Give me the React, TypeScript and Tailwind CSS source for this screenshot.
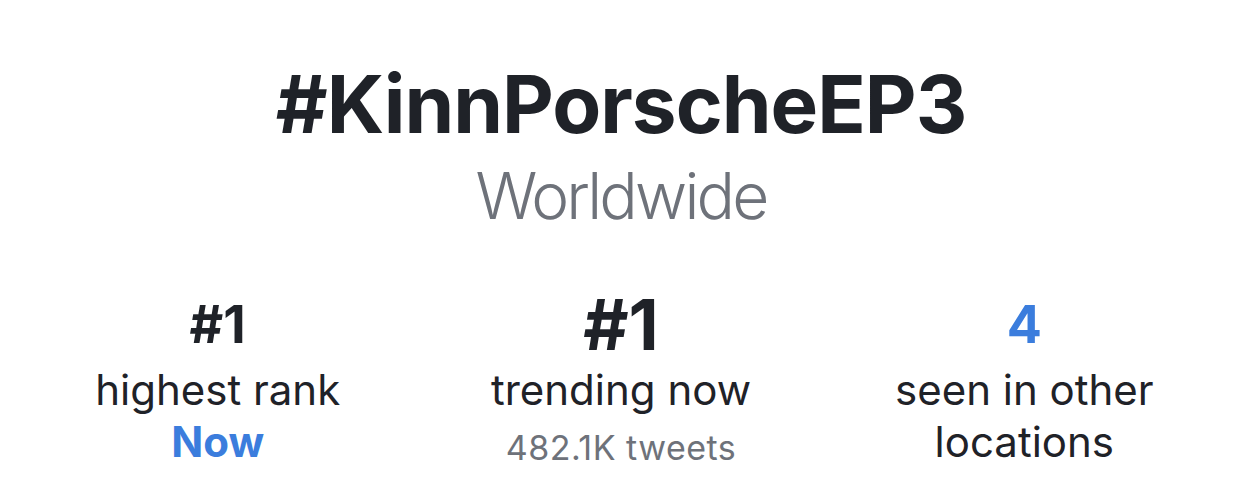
const font = { fontFamily: "Inter, 'Noto Sans', sans-serif" };

function Stat({
  value,
  big,
  blue,
  children,
}: {
  value: string;
  big?: boolean;
  blue?: boolean;
  children: React.ReactNode;
}) {
  return (
    <div className="flex flex-col items-center text-center">
      <div
        className={
          "h-[60px] font-bold leading-[60px] " +
          (big ? "text-[70px] " : "text-[52px] ") +
          (blue ? "text-[#3b7ddd]" : "text-[#1f2228]")
        }
      >
        {value}
      </div>
      {children}
    </div>
  );
}

export default function App() {
  return (
    <div
      className="flex h-[496px] w-[1242px] flex-col items-center bg-white text-[#1f2228]"
      style={font}
    >
      <h1 className="mt-[64px] text-[80px] font-bold leading-[80px] tracking-[-1px]">
        #KinnPorscheEP3
      </h1>
      <p className="mt-[20px] text-[64px] font-light leading-[63px] tracking-[-2.8px] text-[#6e727a]">
        Worldwide
      </p>

      <div className="mt-[68px] grid w-full grid-cols-3 px-4">
        <Stat value="#1">
          <p className="mt-[9px] text-[42px] leading-[52px]">highest rank</p>
          <p className="text-[42px] font-bold leading-[52px] text-[#3b7ddd]">Now</p>
        </Stat>
        <Stat value="#1" big>
          <p className="mt-[9px] text-[42px] leading-[52px]">trending now</p>
          <p className="mt-[6px] text-[34px] leading-[52px] tracking-[0.5px] text-[#6e727a]">
            482.1K tweets
          </p>
        </Stat>
        <Stat value="4" blue>
          <p className="mt-[9px] text-[42px] leading-[52px]">
            seen in other
            <br />
            locations
          </p>
        </Stat>
      </div>
    </div>
  );
}
